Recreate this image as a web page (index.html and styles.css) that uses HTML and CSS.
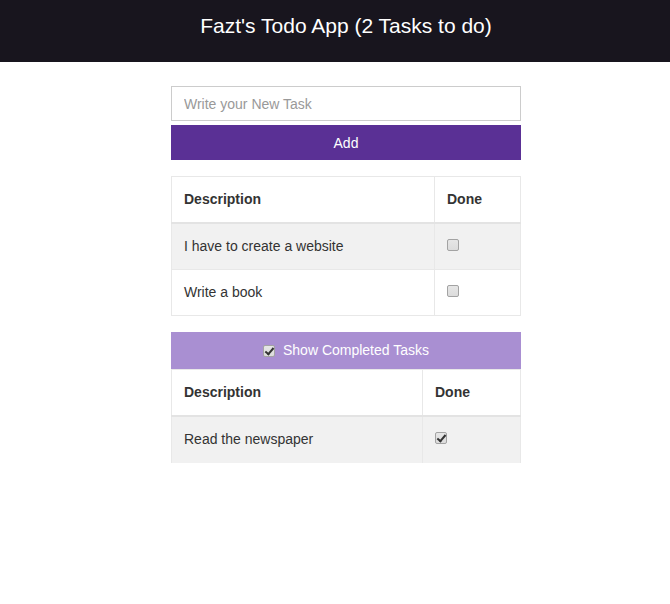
FILE: index.html
```html
<!DOCTYPE html>
<html>
<head>
<meta charset="utf-8">
<link rel="stylesheet" href="styles.css">
</head>
<body>
<nav class="navbar">Fazt's Todo App (2 Tasks to do)</nav>
<main class="container">
  <input class="task-input" type="text" placeholder="Write your New Task">
  <button class="add-btn">Add</button>
  <table class="tasks tasks-open">
    <thead><tr><th>Description</th><th class="done-col">Done</th></tr></thead>
    <tbody>
      <tr class="odd"><td>I have to create a website</td><td><span class="cb"></span></td></tr>
      <tr><td>Write a book</td><td><span class="cb"></span></td></tr>
    </tbody>
  </table>
  <div class="show-completed"><span class="cb checked"></span>Show Completed Tasks</div>
  <table class="tasks tasks-done">
    <thead><tr><th>Description</th><th class="done-col">Done</th></tr></thead>
    <tbody>
      <tr class="odd"><td>Read the newspaper</td><td><span class="cb checked"></span></td></tr>
    </tbody>
  </table>
</main>
</body>
</html>
```
FILE: styles.css
```css
* { box-sizing: border-box; }
body {
  margin: 0;
  font-family: "Liberation Sans", Arial, sans-serif;
  font-size: 14px;
  line-height: 20px;
  color: #333;
  background: #fff;
}
.navbar {
  height: 62px;
  background: #18151e;
  color: #fff;
  font-size: 21px;
  display: flex;
  align-items: center;
  justify-content: center;
  padding: 0 0 10px 22px;
}
.container {
  width: 350px;
  margin: 24px 0 0 calc(50% - 164px);
  display: flex;
  flex-direction: column;
}
.task-input {
  height: 35px;
  border: 1px solid #ccc;
  padding: 0 12px;
  font: inherit;
  color: #555;
  outline: none;
}
.task-input::placeholder { color: #999; }
.add-btn {
  margin-top: 4px;
  height: 35px;
  border: none;
  background: #5a3095;
  color: #fff;
  font: inherit;
}
.tasks {
  width: 100%;
  border-collapse: collapse;
  margin-top: 16px;
  table-layout: fixed;
}
.tasks th, .tasks td {
  border: 1px solid #e8e8e8;
  padding: 12px 12px 13px;
  text-align: left;
  vertical-align: top;
}
.tasks th { font-weight: bold; border-bottom: 2px solid #e3e3e3; }
.tasks tr.odd td { background: #f1f1f1; }
.tasks-open .done-col { width: 86px; }
.tasks-done { margin-top: 0; }
.tasks-done .done-col { width: 98px; }
.tasks-done tbody td { border-bottom: none; padding-bottom: 14px; }
.show-completed {
  margin-top: 16px;
  height: 37px;
  background: #a98fd2;
  color: #fff;
  display: flex;
  align-items: center;
  justify-content: center;
  gap: 8px;
  padding-bottom: 2px;
}
.cb {
  display: inline-block;
  width: 12px;
  height: 12px;
  margin-top: 3px;
  border: 1px solid #a3a3a3;
  border-radius: 2px;
  background: linear-gradient(#e6e6e6, #dcdcdc);
  position: relative;
}
.show-completed .cb { margin-top: 2px; }
.cb.checked::after {
  content: "";
  position: absolute;
  left: 3px;
  top: 0px;
  width: 3px;
  height: 7px;
  border: solid #333;
  border-width: 0 2px 2px 0;
  transform: rotate(40deg);
}
```
